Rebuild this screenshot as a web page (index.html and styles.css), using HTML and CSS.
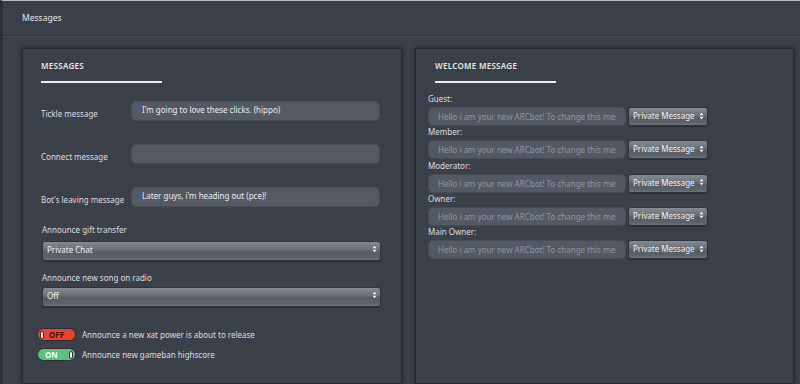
FILE: index.html
```html
<!DOCTYPE html>
<html lang="en">
<head>
    <meta charset="UTF-8">
    <meta name="viewport" content="width=device-width, initial-scale=1.0">
    <title>Messages</title>
    <link rel="stylesheet" href="styles.css">
</head>
<body>
    <div class="header">Messages</div>
    <div class="main">
        <div class="panel panel-left">
            <div class="panel-title">MESSAGES</div>
            <div class="title-bar"></div>
            <div class="msg-grid">
                <label class="msg-label">Tickle message</label>
                <input type="text" class="text-field" value="I'm going to love these clicks. (hippo)">
                <label class="msg-label">Connect message</label>
                <input type="text" class="text-field" value="">
                <label class="msg-label">Bot's leaving message</label>
                <input type="text" class="text-field" value="Later guys, i'm heading out (pce)!">
            </div>
            <div class="field-label first">Announce gift transfer</div>
            <div class="select-box wide">
                <span>Private Chat</span>
                <svg class="arrows" width="5" height="8" viewBox="0 0 5 8"><path d="M0.5 3.2 L2.5 0.8 L4.5 3.2 Z M0.5 4.8 L2.5 7.2 L4.5 4.8 Z" fill="#f2f2f2"/></svg>
            </div>
            <div class="field-label">Announce new song on radio</div>
            <div class="select-box wide">
                <span>Off</span>
                <svg class="arrows" width="5" height="8" viewBox="0 0 5 8"><path d="M0.5 3.2 L2.5 0.8 L4.5 3.2 Z M0.5 4.8 L2.5 7.2 L4.5 4.8 Z" fill="#f2f2f2"/></svg>
            </div>
            <div class="toggles">
                <div class="toggle-row">
                    <div class="toggle off"><span class="knob"></span><span class="toggle-text">OFF</span></div>
                    <span class="toggle-label">Announce a new xat power is about to release</span>
                </div>
                <div class="toggle-row">
                    <div class="toggle on"><span class="toggle-text">ON</span><span class="knob"></span></div>
                    <span class="toggle-label">Announce new gameban highscore</span>
                </div>
            </div>
        </div>
        <div class="panel panel-right">
            <div class="panel-title">WELCOME MESSAGE</div>
            <div class="title-bar"></div>
            <div class="welcome-list">
                <div class="welcome-row">
                    <div class="rank">Guest:</div>
                    <div class="welcome-line">
                        <input type="text" class="welcome-field" placeholder="Hello i am your new ARCbot! To change this message">
                        <div class="select-box small"><span>Private Message</span><svg class="arrows" width="5" height="8" viewBox="0 0 5 8"><path d="M0.5 3.2 L2.5 0.8 L4.5 3.2 Z M0.5 4.8 L2.5 7.2 L4.5 4.8 Z" fill="#f2f2f2"/></svg></div>
                    </div>
                </div>
                <div class="welcome-row">
                    <div class="rank">Member:</div>
                    <div class="welcome-line">
                        <input type="text" class="welcome-field" placeholder="Hello i am your new ARCbot! To change this message">
                        <div class="select-box small"><span>Private Message</span><svg class="arrows" width="5" height="8" viewBox="0 0 5 8"><path d="M0.5 3.2 L2.5 0.8 L4.5 3.2 Z M0.5 4.8 L2.5 7.2 L4.5 4.8 Z" fill="#f2f2f2"/></svg></div>
                    </div>
                </div>
                <div class="welcome-row">
                    <div class="rank">Moderator:</div>
                    <div class="welcome-line">
                        <input type="text" class="welcome-field" placeholder="Hello i am your new ARCbot! To change this message">
                        <div class="select-box small"><span>Private Message</span><svg class="arrows" width="5" height="8" viewBox="0 0 5 8"><path d="M0.5 3.2 L2.5 0.8 L4.5 3.2 Z M0.5 4.8 L2.5 7.2 L4.5 4.8 Z" fill="#f2f2f2"/></svg></div>
                    </div>
                </div>
                <div class="welcome-row">
                    <div class="rank">Owner:</div>
                    <div class="welcome-line">
                        <input type="text" class="welcome-field" placeholder="Hello i am your new ARCbot! To change this message">
                        <div class="select-box small"><span>Private Message</span><svg class="arrows" width="5" height="8" viewBox="0 0 5 8"><path d="M0.5 3.2 L2.5 0.8 L4.5 3.2 Z M0.5 4.8 L2.5 7.2 L4.5 4.8 Z" fill="#f2f2f2"/></svg></div>
                    </div>
                </div>
                <div class="welcome-row">
                    <div class="rank">Main Owner:</div>
                    <div class="welcome-line">
                        <input type="text" class="welcome-field" placeholder="Hello i am your new ARCbot! To change this message">
                        <div class="select-box small"><span>Private Message</span><svg class="arrows" width="5" height="8" viewBox="0 0 5 8"><path d="M0.5 3.2 L2.5 0.8 L4.5 3.2 Z M0.5 4.8 L2.5 7.2 L4.5 4.8 Z" fill="#f2f2f2"/></svg></div>
                    </div>
                </div>
            </div>
        </div>
    </div>
</body>
</html>
```

FILE: styles.css
```css
body {
    font-family: "Noto Sans", "Open Sans", sans-serif;
    background: #3a3f48;
    color: #d9dbde;
    margin: 0;
    width: 800px;
    height: 384px;
    overflow: hidden;
    border-top: 1px solid #b9bbbf;
    border-left: 3px solid #2c3039;
    box-sizing: border-box;
}
.header {
    height: 34px;
    line-height: 33px;
    padding-left: 19px;
    font-size: 8.5px;
    color: #e4e6e8;
    border-bottom: 1px solid #2b2f38;
    box-shadow: 0 1px 0 #454a53;
}
.main {
    display: flex;
    gap: 13px;
    padding: 12px 6px 0 19px;
}
.panel {
    background: #3c4049;
    border: 1px solid #252936;
    border-radius: 2px;
    box-shadow: 0 0 4px rgba(10, 12, 25, 0.6);
    height: 336px;
    box-sizing: border-box;
    padding-top: 12px;
}
.panel-left {
    width: 380px;
    padding-left: 18px;
    padding-right: 21px;
}
.panel-right {
    width: 380px;
    padding-left: 12px;
    padding-right: 20px;
}
.panel-title {
    font-size: 8px;
    font-weight: 600;
    letter-spacing: 0.3px;
    color: #e6e8ea;
    line-height: 10px;
}
.panel-right .panel-title, .panel-right .title-bar {
    margin-left: 7px;
}
.title-bar {
    width: 121px;
    height: 2px;
    background: #eceef0;
    margin-top: 10px;
}
.msg-grid {
    display: grid;
    grid-template-columns: 90px 249px;
    row-gap: 23px;
    margin-top: 18px;
    align-items: center;
}
.msg-label {
    font-size: 8px;
    padding-top: 5px;
    color: #dcdee1;
}
.text-field {
    height: 20px;
    box-sizing: border-box;
    border: 1px solid #474c55;
    border-radius: 5px;
    background: #545963;
    color: #eceef0;
    font-family: inherit;
    font-size: 8px;
    padding: 0 10px;
    line-height: 18px;
    padding-bottom: 4px;
    outline: none;
}
.field-label {
    font-size: 8px;
    line-height: 11px;
    color: #dcdee1;
    margin: 11px 0 4px 1px;
}
.field-label.first {
    margin: 17px 0 6px 1px;
}
.select-box {
    display: flex;
    align-items: center;
    justify-content: space-between;
    box-sizing: border-box;
    border: 1px solid #30343c;
    border-radius: 3px;
    background: linear-gradient(#868b92 0%, #6c7179 40%, #585d65 55%, #5d626a 85%, #70757c 100%);
    box-shadow: 0 1px 1px rgba(0, 0, 0, 0.3);
    color: #f1f2f3;
    font-size: 8px;
}
.select-box.wide {
    width: 339px;
    height: 20px;
    margin-left: 1px;
    padding: 0 3px 4px 4px;
}
.select-box.small {
    width: 80px;
    height: 19px;
    padding: 0 3px 2px 4px;
    font-size: 8px;
}
.arrows {
    flex-shrink: 0;
}
.toggles {
    margin-top: 21px;
    margin-left: -4px;
    display: flex;
    flex-direction: column;
    gap: 7px;
}
.toggle-row {
    display: flex;
    align-items: center;
    gap: 6px;
}
.toggle {
    width: 39px;
    height: 13px;
    box-sizing: border-box;
    border: 1px solid #2a2d33;
    border-radius: 7px;
    display: flex;
    align-items: center;
    padding: 0 2px;
    font-size: 8px;
    font-weight: bold;
}
.toggle.off {
    background: #e8452f;
    color: #4a120a;
}
.toggle.on {
    background: #5fbf7c;
    color: #f4fff6;
    justify-content: space-between;
}
.toggle-text {
    margin-left: 5px;
}
.knob {
    width: 4px;
    height: 8px;
    background: #f7f7f7;
    border: 1px solid #333;
    border-radius: 3px;
    box-sizing: border-box;
}
.toggle-label {
    font-size: 8px;
    color: #dcdee1;
}
.welcome-list {
    margin-top: 11px;
    display: flex;
    flex-direction: column;
    gap: 1.3px;
}
.rank {
    font-size: 8px;
    color: #dcdee1;
    line-height: 10px;
    margin-bottom: 3px;
}
.welcome-line {
    display: flex;
    align-items: center;
    gap: 2px;
}
.welcome-field {
    width: 198px;
    height: 19px;
    box-sizing: border-box;
    border: 1px solid #474c55;
    border-radius: 5px;
    background: #535862;
    font-family: inherit;
    font-size: 8px;
    padding: 0 9px;
    outline: none;
}
.welcome-field::placeholder {
    color: #9196a0;
}
```
